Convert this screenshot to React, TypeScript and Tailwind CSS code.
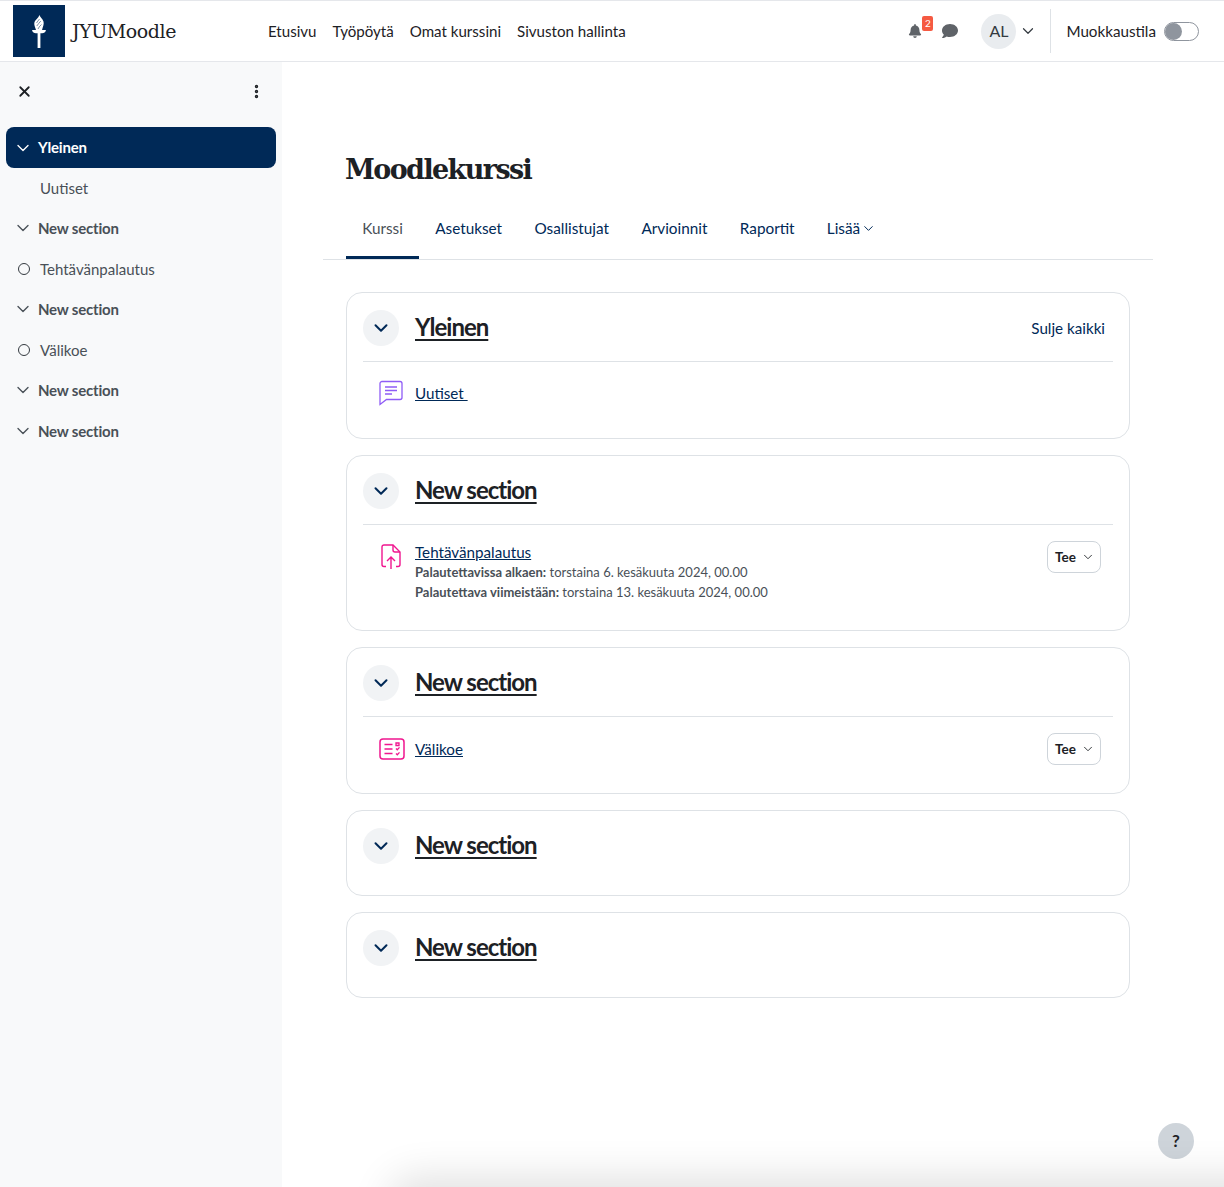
import { ChevronDown, MoreVertical, X } from "lucide-react";
import { FaBell, FaComment } from "react-icons/fa";

const navLinks = ["Etusivu", "Työpöytä", "Omat kurssini", "Sivuston hallinta"];
const tabs = ["Asetukset", "Osallistujat", "Arvioinnit", "Raportit"];

const sidebarItems = [
  { label: "New section", kind: "section" },
  { label: "Tehtävänpalautus", kind: "activity" },
  { label: "New section", kind: "section" },
  { label: "Välikoe", kind: "activity" },
  { label: "New section", kind: "section" },
  { label: "New section", kind: "section" },
];

function TorchLogo() {
  return (
    <div className="flex h-[52px] w-[52px] items-center justify-center bg-[#002957]">
      <svg width="14" height="33" viewBox="0 0 14 33" fill="none" stroke="#fff">
        <path d="M7.500 0C8 2 10.500 3.500 11.500 6.500c.7 2.500-.5 5-1.500 8.500H4C3 12 1.700 9.500 2.500 7 3.500 4.500 6.500 3 7.500 0z" fill="#fff" stroke="none" />
        <path d="M4.500 8c.8-1.500 2-2.500 3-4M4.800 11c1-1.700 2.500-3 4-5M6 14c.8-1.800 2-3.300 3.500-4.500" stroke="#002957" strokeWidth="0.500" />
        <path d="M0 15h14l-.8 2c-.8.800-2.300 1.300-4.800 1.300V33H5.600V18.300C3.100 18.300 1.600 17.800.8 17z" fill="#fff" stroke="none" />
      </svg>
    </div>
  );
}

function ForumIcon() {
  return (
    <svg width="26" height="26" viewBox="0 0 26 26" fill="none" stroke="#8f5cf6" strokeWidth="1.300">
      <path d="M4 1.500h18a2 2 0 0 1 2 2v14a2 2 0 0 1-2 2H8.500L2 24.500V3.500a2 2 0 0 1 2-2z" />
      <path d="M7 7h12M7 10.500h12M7 14h7" strokeWidth="1.700" />
    </svg>
  );
}

function AssignIcon() {
  return (
    <svg width="22" height="26" viewBox="0 0 22 26" fill="none" stroke="#f0168f" strokeWidth="1.400">
      <path d="M6 22.500H4a2 2 0 0 1-2-2V3a2 2 0 0 1 2-2h9l7 7v12.500a2 2 0 0 1-2 2h-2" />
      <path d="M13 1v5a2 2 0 0 0 2 2h5" />
      <path d="M11 25V13M7 17l4-4 4 4" />
    </svg>
  );
}

function QuizIcon() {
  return (
    <svg width="26" height="22" viewBox="0 0 26 22" fill="none" stroke="#f0168f" strokeWidth="1.500">
      <rect x="1" y="1" width="24" height="20" rx="3" />
      <path d="M5.500 6.500h8M5.500 11h8M5.500 15.500h8" />
      <path d="M17 5h3v2.500h-3zM17 10.500l1.300 1.300 2.200-2.400M17 15.500l1.300 1.300 2.200-2.400" strokeWidth="1.300" />
    </svg>
  );
}

function TeeButton() {
  return (
    <button className="flex h-[32px] w-[54px] items-center justify-center gap-[5px] rounded-[8px] border border-[#ced4da] bg-white pl-[2px] text-[13.500px] font-bold text-[#1d2125]">
      Tee
      <ChevronDown size={14} strokeWidth={1.500} />
    </button>
  );
}

function SectionCard({ title, height, action, children }: { title: string; height: string; action?: string; children?: React.ReactNode }) {
  return (
    <section className={`${height} rounded-[16px] border border-[#dee2e6] px-[16px] pt-[17px]`}>
      <div className="flex h-[36px] items-center">
        <div className="flex h-[36px] w-[36px] items-center justify-center rounded-full bg-[#f1f3f5] text-[#002957]">
          <ChevronDown size={22} strokeWidth={2.200} />
        </div>
        <h3 className="mb-[2px] ml-[16px] text-[24px] leading-[36px] font-bold tracking-[-1px] text-[#1d2125] underline decoration-[2px] underline-offset-[3px]">{title}</h3>
        {action && <a className="ml-auto mr-[8px] text-[#002957]">{action}</a>}
      </div>
      {children && <div className="mt-[15px] border-t border-[#dee2e6]">{children}</div>}
    </section>
  );
}

export default function App() {
  return (
    <div className="relative flex h-[1187px] flex-col overflow-hidden bg-white font-['Lato',sans-serif] text-[15.200px] text-[#1d2125]">
      {/* Navbar */}
      <header className="flex h-[62px] shrink-0 items-center border-y border-[#e5e7eb] bg-white pl-[13px]">
        <TorchLogo />
        <span className="ml-[7px] font-['DejaVu_Serif',serif] text-[19px] tracking-[-0.45px] text-[#1d2125]">JYUMoodle</span>
        <nav className="ml-[92px] flex gap-[16px] text-[15.100px]">
          {navLinks.map((link) => (
            <a key={link}>{link}</a>
          ))}
        </nav>
        <div className="ml-auto flex items-center pr-[25px]">
          <div className="relative mr-[20px] text-[#5f6368]">
            <FaBell size={14} />
            <span className="absolute -top-[8px] left-[14px] flex h-[15px] w-[11px] items-center justify-center rounded-[2px] bg-[#f55a42] text-[10px] text-white">2</span>
          </div>
          <FaComment size={16} className="mr-[23px] text-[#5f6368]" />
          <div className="flex h-[35px] w-[35px] items-center justify-center rounded-full bg-[#e9ecef] text-[16px] text-[#343a40]">AL</div>
          <ChevronDown size={18} strokeWidth={1.600} className="ml-[3px] text-[#343a40]" />
          <div className="ml-[13px] h-[44px] w-px bg-[#dee2e6]" />
          <span className="ml-[15px]">Muokkaustila</span>
          <div className="ml-[8px] flex h-[19px] w-[35px] items-center rounded-full border border-[#8f959e] bg-white">
            <div className="h-[17px] w-[17px] rounded-full bg-[#8f959e]" />
          </div>
        </div>
      </header>

      <div className="flex flex-1">
        {/* Course index */}
        <aside className="w-[282px] shrink-0 bg-[#f8f9fa] px-[6px] text-[15px]">
          <div className="flex h-[65px] items-center justify-between pb-[6px] pl-[10px] pr-[11px] text-[#1d2125]">
            <X size={17} strokeWidth={2.500} />
            <MoreVertical size={17} strokeWidth={2.800} />
          </div>
          <div className="flex h-[41px] items-center rounded-[8px] bg-[#002957] pl-[7px] font-bold tracking-[-0.2px] text-white">
            <ChevronDown size={20} strokeWidth={1.600} />
            <span className="ml-[5px]">Yleinen</span>
          </div>
          <div className="flex h-[40px] items-center pl-[34px] text-[#495057]">Uutiset</div>
          {sidebarItems.map((item, i) =>
            item.kind === "section" ? (
              <div key={i} className="flex h-[40.500px] items-center pl-[7px] font-bold tracking-[-0.2px] text-[#495057]">
                <ChevronDown size={20} strokeWidth={1.600} />
                <span className="ml-[5px]">{item.label}</span>
              </div>
            ) : (
              <div key={i} className="flex h-[40.500px] items-center pl-[12px] text-[#495057]">
                <span className="h-[12px] w-[12px] rounded-full border-[1.500px] border-[#343a40]" />
                <span className="ml-[10px]">{item.label}</span>
              </div>
            ),
          )}
        </aside>

        {/* Main */}
        <main className="flex-1 pl-[41px]">
          <h1 className="mt-[88px] ml-[22px] font-['DejaVu_Serif',serif] text-[27px] leading-[40px] font-bold tracking-[-1.600px] text-[#1d2125]">Moodlekurssi</h1>
          <div className="mt-[11px] flex h-[59px] w-[830px] items-stretch border-b border-[#dee2e6] pl-[23px] text-[15.300px]">
            <a className="flex w-[73px] items-center justify-center border-b-[3px] border-[#002957] text-[#495057]">Kurssi</a>
            {tabs.map((tab) => (
              <a key={tab} className="flex items-center px-[16.200px] pb-[4px] text-[#002957]">{tab}</a>
            ))}
            <a className="flex items-center gap-[1px] px-[16px] pb-[4px] text-[#002957]">
              Lisää
              <ChevronDown size={15} strokeWidth={1.600} />
            </a>
          </div>

          <div className="mt-[32px] ml-[23px] flex w-[784px] flex-col gap-[16px]">
            <SectionCard title="Yleinen" height="h-[147px]" action="Sulje kaikki">
              <div className="flex items-center pt-[18px] pl-[15px]">
                <ForumIcon />
                <a className="ml-[11px] whitespace-pre text-[#002957] underline">Uutiset </a>
              </div>
            </SectionCard>

            <SectionCard title="New section" height="h-[176px]">
              <div className="flex items-start pt-[16px] pr-[12px]">
                <div className="ml-[17px] mt-[3px] w-[35px]">
                  <AssignIcon />
                </div>
                <div className="mt-[1px] leading-[20px]">
                  <a className="block text-[#002957] underline">Tehtävänpalautus</a>
                  <p className="text-[13px] text-[#495057]">
                    <b>Palautettavissa alkaen:</b> torstaina 6. kesäkuuta 2024, 00.00
                  </p>
                  <p className="text-[13px] text-[#495057]">
                    <b>Palautettava viimeistään:</b> torstaina 13. kesäkuuta 2024, 00.00
                  </p>
                </div>
                <div className="ml-auto">
                  <TeeButton />
                </div>
              </div>
            </SectionCard>

            <SectionCard title="New section" height="h-[147px]">
              <div className="flex items-center pt-[16px] pr-[12px]">
                <div className="ml-[16px] w-[36px]">
                  <QuizIcon />
                </div>
                <a className="text-[#002957] underline">Välikoe</a>
                <div className="ml-auto">
                  <TeeButton />
                </div>
              </div>
            </SectionCard>

            <SectionCard title="New section" height="h-[86px]" />
            <SectionCard title="New section" height="h-[86px]" />
          </div>
        </main>
      </div>

      {/* Help button */}
      <button className="absolute top-[1123px] left-[1158px] flex h-[36px] w-[36px] items-center justify-center rounded-full bg-[#ced4da] text-[17px] font-bold text-[#1d2125]">?</button>
      {/* Shadow from a panel sitting just below the fold */}
      <div className="absolute top-[1197px] left-[410px] h-[60px] w-[900px] rounded-[8px] shadow-[0_0_40px_20px_rgba(0,0,0,0.12)]" />
    </div>
  );
}
